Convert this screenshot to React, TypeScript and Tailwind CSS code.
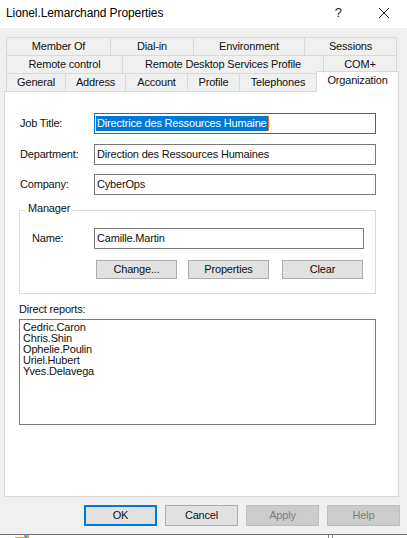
const font = "font-['Liberation_Sans',Arial,sans-serif]";
const txt = "text-[11px] tracking-[-0.18px] leading-none text-[#111]";

function Tab({ w, label, last }: { w: string; label: string; last?: boolean }) {
  return (
    <div className={`${w} h-[18px] shrink-0 flex items-center justify-center border-t border-l border-[#d9d9d9] bg-[#f0f0f0] ${last ? "border-r" : ""} ${txt} whitespace-nowrap`}>
      {label}
    </div>
  );
}

function Field({ label, value, w = "w-[282px]", selected, focus, labelW = "w-[75px]", labelPad = "pl-[1px]" }: { label: string; value: string; w?: string; selected?: boolean; focus?: boolean; labelW?: string; labelPad?: string }) {
  return (
    <div className="flex items-center h-[21px]">
      <div className={`${labelW} ${labelPad} shrink-0 ${txt}`}>{label}</div>
      <div className={`${w} h-[21px] bg-white border flex items-center pl-[2px] ${txt} whitespace-nowrap ${focus ? "border-[#0078d7]" : "border-[#7a7a7a]"}`}>
        {selected ? <span className="bg-[#0078d7] text-white h-[15px] flex items-center -ml-[1px] pl-[1px] pr-[1px] border-r border-[#e8730c]">{value}</span> : value}
      </div>
    </div>
  );
}

function SmallBtn({ label, w }: { label: string; w: string }) {
  return (
    <div className={`${w} h-[19px] bg-[#e1e1e1] border border-[#adadad] flex items-center justify-center ${txt}`}>{label}</div>
  );
}

function FootBtn({ label, kind }: { label: string; kind?: "primary" | "disabled" }) {
  const cls =
    kind === "primary"
      ? "border-2 border-[#0078d7] bg-[#e1e1e1] text-[#111]"
      : kind === "disabled"
      ? "border border-[#bfbfbf] bg-[#cccccc] text-[#7f7f7f]"
      : "border border-[#adadad] bg-[#e1e1e1] text-[#111]";
  return <div className={`w-[73px] h-[21px] flex items-center justify-center text-[11px] tracking-[-0.18px] leading-none ${cls}`}>{label}</div>;
}

export default function App() {
  return (
    <div className={`${font} w-[407px] h-[538px] bg-white flex flex-col overflow-hidden`}>
      <div className="h-[28px] shrink-0 bg-white flex items-center pl-[6px] pr-[18px] text-black">
        <span className="flex-1 text-[12px] tracking-[-0.1px] leading-none -mt-[3px]">Lionel.Lemarchand Properties</span>
        <span className="text-[13px] leading-none mr-[37px] -mt-[3px] text-[#222]">?</span>
        <svg width="10" height="10" viewBox="0 0 10 10" className="-mt-[3px]">
          <path d="M0 0 L10 10 M10 0 L0 10" stroke="#222" strokeWidth="1" fill="none" />
        </svg>
      </div>

      <div className="h-[507px] shrink-0 bg-[#f0f0f0] border-b border-[#6f6f6f] flex flex-col pl-[4px] pr-[8px] pt-[9px]">
        <div className="flex pl-[2px]">
          <Tab w="w-[104px]" label="Member Of" />
          <Tab w="w-[83px]" label="Dial-in" />
          <Tab w="w-[111px]" label="Environment" />
          <Tab w="w-[93px]" label="Sessions" last />
        </div>
        <div className="flex pl-[2px]">
          <Tab w="w-[116px]" label="Remote control" />
          <Tab w="w-[201px]" label="Remote Desktop Services Profile" />
          <Tab w="w-[74px]" label="COM+" last />
        </div>
        <div className="flex pl-[2px] relative z-10 items-end">
          <Tab w="w-[59px]" label="General" />
          <Tab w="w-[60px]" label="Address" />
          <Tab w="w-[62px]" label="Account" />
          <Tab w="w-[52px]" label="Profile" />
          <Tab w="w-[77px]" label="Telephones" />
          <div className={`w-[83px] h-[21px] -mt-[2px] -mb-[1px] shrink-0 bg-white border border-b-0 border-[#d9d9d9] flex items-center justify-center ${txt} pb-[3px]`}>
            Organization
          </div>
        </div>

        <div className="h-[406px] bg-white border border-[#d9d9d9] flex flex-col pl-[14px] pr-[22px] pt-[21px]">
          <div className="flex flex-col gap-[9.5px]">
            <Field label="Job Title:" value="Directrice des Ressources Humaine" focus selected />
            <Field label="Department:" value="Direction des Ressources Humaines" />
            <Field label="Company:" value="CyberOps" />
          </div>

          <div className="relative mt-[15px] h-[84px] border border-[#dcdcdc] pt-[17px] pl-[12px]">
            <span className={`absolute -top-[8px] left-[5px] bg-white px-[3px] ${txt} leading-[15px]`}>Manager</span>
            <Field label="Name:" value="Camille.Martin" w="w-[270px]" labelW="w-[62px]" labelPad="pl-0" />
            <div className="flex mt-[11px] ml-[64px]">
              <SmallBtn label="Change..." w="w-[81px]" />
              <div className="w-[11px]" />
              <SmallBtn label="Properties" w="w-[81px]" />
              <div className="w-[13px]" />
              <SmallBtn label="Clear" w="w-[81px]" />
            </div>
          </div>

          <div className={`mt-[10px] ${txt} leading-[14px]`}>Direct reports:</div>
          <div className={`mt-[4px] h-[106px] border border-[#7a7a7a] bg-white pl-[3px] pt-[2px] ${txt} leading-[13px]`}>
            <div>Cedric.Caron</div>
            <div>Chris.Shin</div>
            <div>Ophelie.Poulin</div>
            <div>Uriel.Hubert</div>
            <div>Yves.Delavega</div>
          </div>
        </div>

        <div className="mt-[8px] flex justify-end gap-[8px] -mr-[1px]">
          <FootBtn label="OK" kind="primary" />
          <FootBtn label="Cancel" />
          <FootBtn label="Apply" kind="disabled" />
          <FootBtn label="Help" kind="disabled" />
        </div>
      </div>
      <div className="flex-1 bg-white flex items-start pl-[15px] relative">
        <svg width="14" height="3" viewBox="0 0 14 3">
          <path d="M0 2 H9 V0 H14 V3 H0 Z" fill="#d9a94f" />
          <rect x="10" y="1" width="2" height="2" fill="#5a9bd5" />
        </svg>
        <div className="absolute left-[328px] top-0 w-[5px] h-[3px] border-l border-r border-[#8a8a8a]" />
      </div>
    </div>
  );
}
